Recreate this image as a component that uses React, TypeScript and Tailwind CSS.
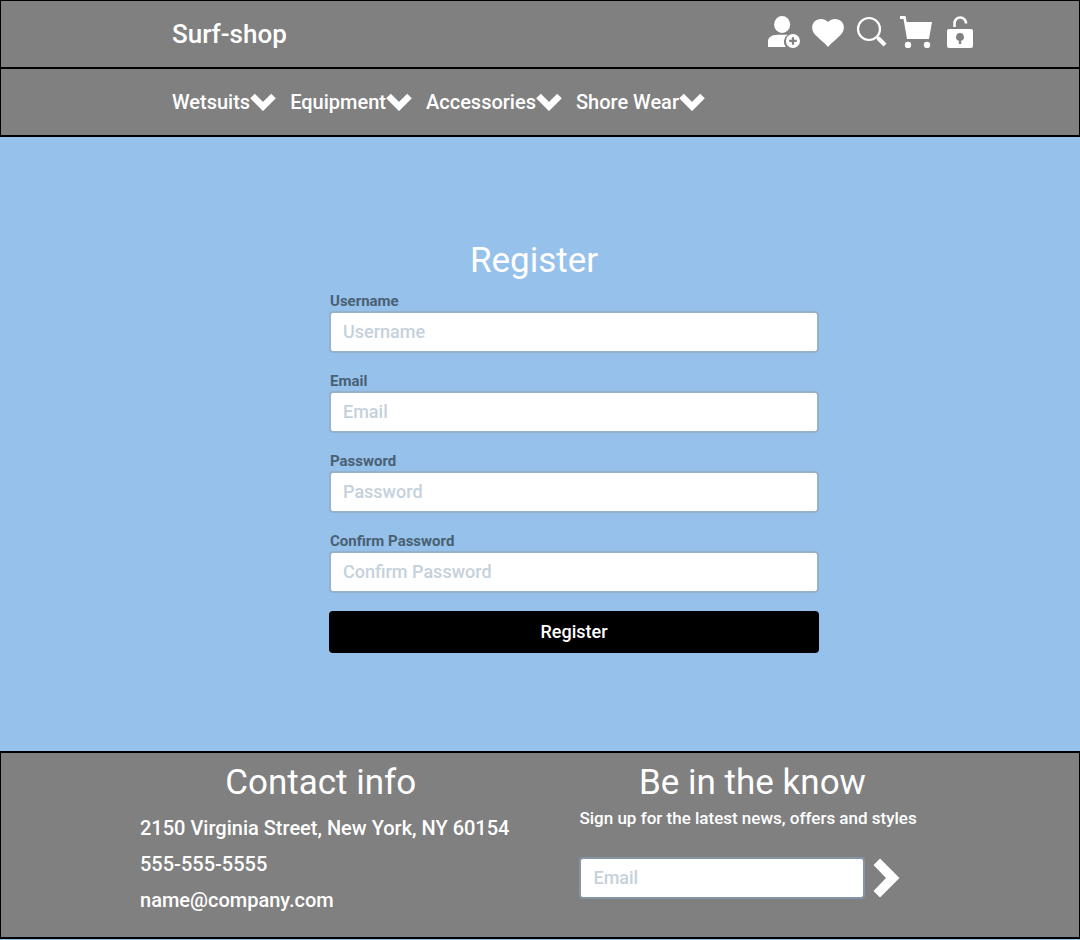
import { useId } from "react";

const font = "font-['Roboto','Liberation_Sans',sans-serif]";

function Chevron() {
  return (
    <svg viewBox="0 0 26 18" className="h-[18px] w-[26px] shrink-0" fill="none" stroke="currentColor" strokeWidth="6.500" aria-hidden="true">
      <path d="M2.500 3 L13 13.500 L23.500 3" />
    </svg>
  );
}

function MenuItem({ label }: { label: string }) {
  return (
    <button type="button" className="flex items-center text-xl font-medium leading-8">
      {label}
      <Chevron />
    </button>
  );
}

function Field({ label, type }: { label: string; type: string }) {
  const id = useId();
  return (
    <div className="mb-[18px] flex flex-col">
      <label htmlFor={id} className="px-px text-[15px] font-bold leading-5 text-[#4a6072]">
        {label}
      </label>
      <input
        id={id}
        type={type}
        placeholder={label}
        className="h-[42px] w-full rounded-sm border-2 border-[#96b1cc] bg-white px-3 pb-0.5 text-lg font-medium text-slate-700 placeholder:text-[#c5d1dc]"
      />
    </div>
  );
}

export default function App() {
  return (
    <div className={`min-h-screen bg-[#95c1eb] text-white ${font}`}>
      <header>
        <div className="flex h-17 items-center justify-between border border-black bg-[#808080] pr-[103px] pl-[171px]">
          <a href="#" className="text-[26px] font-medium leading-8">Surf-shop</a>
          <nav aria-label="Account" className="flex items-center gap-3 pb-1">
            <a href="#register" aria-label="Register">
              <svg viewBox="0 0 34 34" className="h-8 w-8" fill="currentColor" aria-hidden="true">
                <ellipse cx="15" cy="9" rx="8.5" ry="9" />
                <path d="M0 33v-6c0-4 4-7 10-7h11a8.500 8.500 0 0 0-2 12.900z" />
                <path fillRule="evenodd" d="M26.500 19a7.500 7.500 0 1 1 0 15 7.500 7.500 0 0 1 0-15zm-1.200 3.500v2.800h-2.800v2.400h2.800v2.800h2.400v-2.800h2.800v-2.400h-2.800v-2.800z" />
              </svg>
            </a>
            <a href="#wishlist" aria-label="Wishlist">
              <svg viewBox="0 0 32 32" className="h-8 w-8" fill="currentColor" aria-hidden="true">
                <path d="M16 31C13 27 7 23 3 18.500C-1 14 -.5 8.500 2.500 5.500C6 2 12.500 2 16 6C19.500 2 26 2 29.500 5.500C32.500 8.500 33 14 29 18.500C25 23 19 27 16 31z" />
              </svg>
            </a>
            <button type="button" aria-label="Search">
              <svg viewBox="0 0 32 32" className="h-8 w-8" fill="none" stroke="currentColor" aria-hidden="true">
                <circle cx="13" cy="13" r="11" strokeWidth="2.200" />
                <path d="M20.500 20.500l3 3" strokeWidth="2.500" />
                <path d="M22 22l7 7" strokeWidth="4" />
              </svg>
            </button>
            <a href="#cart" aria-label="Cart">
              <svg viewBox="0 0 32 32" className="h-8 w-8" fill="currentColor" aria-hidden="true">
                <path d="M0 0h5.500l1.200 6H32l-3 17H7L3.500 3H0z" />
                <circle cx="8" cy="29" r="3.200" />
                <circle cx="27" cy="29" r="3.200" />
              </svg>
            </a>
            <a href="#login" aria-label="Log in">
              <svg viewBox="0 0 32 32" className="h-8 w-8" fill="currentColor" aria-hidden="true">
                <path fillRule="evenodd" d="M5 13h22q2 0 2 2v15q0 2-2 2H5q-2 0-2-2V15q0-2 2-2zm11 4a4 4 0 0 0-1.200 7.800V28h2.400v-3.200A4 4 0 0 0 16 17z" />
                <path d="M10.500 11V7.500a5.700 6 0 0 1 11.500 0" fill="none" stroke="currentColor" strokeWidth="2.600" />
              </svg>
            </a>
          </nav>
        </div>
        <nav aria-label="Departments" className="flex h-17 items-center gap-3.5 border border-black bg-[#808080] pl-[171px]">
          <MenuItem label="Wetsuits" />
          <MenuItem label="Equipment" />
          <MenuItem label="Accessories" />
          <MenuItem label="Shore Wear" />
        </nav>
      </header>

      <main className="flex justify-center border-t border-black pt-[98px] pb-[98px] pl-[68px]">
        <form className="w-[490px]" onSubmit={(e) => e.preventDefault()}>
          <h1 className="mb-1 pr-20 text-center text-[35px] leading-[52px]">Register</h1>
          <Field label="Username" type="text" />
          <Field label="Email" type="email" />
          <Field label="Password" type="password" />
          <Field label="Confirm Password" type="password" />
          <button type="submit" className="block h-[42px] w-full rounded-sm bg-black text-lg font-medium">
            Register
          </button>
        </form>
      </main>

      <footer className="flex justify-start gap-[70px] border-x border-y-2 border-black bg-[#808080] pt-2 pb-[19px] pl-[139px]">
        <section>
          <h2 className="pr-2 text-center text-[35px] leading-[44px]">Contact info</h2>
          <address className="flex flex-col pt-[5px] text-xl font-medium not-italic leading-9">
            <span>2150 Virginia Street, New York, NY 60154</span>
            <a href="tel:555-555-5555">555-555-5555</a>
            <a href="mailto:name@company.com">name@company.com</a>
          </address>
        </section>
        <section className="w-[346px]">
          <h2 className="text-center text-[35px] leading-[44px]">Be in the know</h2>
          <p className="text-[17px] font-medium leading-[26px]">Sign up for the latest news, offers and styles</p>
          <form className="flex items-center gap-2 pt-[26px]" onSubmit={(e) => e.preventDefault()}>
            <input
              type="email"
              aria-label="Email"
              placeholder="Email"
              className="h-[42px] w-[286px] rounded-sm border-2 border-[#8695a5] bg-white px-3 pb-0.5 text-lg font-medium text-slate-700 placeholder:text-[#c5d1dc]"
            />
            <button type="submit" aria-label="Subscribe">
              <svg viewBox="0 0 27 40" className="h-10 w-[27px]" fill="currentColor" aria-hidden="true">
                <path d="M.5 7L7 .5 26.500 20 7 39.500.5 33l12.500-13z" />
              </svg>
            </button>
          </form>
        </section>
      </footer>
    </div>
  );
}
